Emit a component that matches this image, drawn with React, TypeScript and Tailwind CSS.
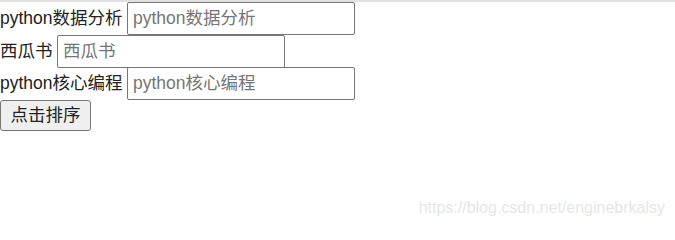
import { useState } from 'react';

const font = 'font-["Liberation_Sans","Noto_Sans_CJK_SC",sans-serif]';

const books = [
  { id: 'a', name: 'python数据分析', label: 'w-[123px]' },
  { id: 'b', name: '西瓜书', label: 'w-[53px]' },
  { id: 'c', name: 'python核心编程', label: 'w-[123px]' },
];

export default function App() {
  const [values, setValues] = useState<Record<string, string>>({});

  return (
    <div className={`${font} flex h-[227px] flex-col bg-white text-[17.5px] text-[#222]`}>
      <div className="h-[2px] bg-[#e1e1e1]" />
      <div className="flex flex-col">
        {books.map((b, i) => (
          <div key={b.id} className={`flex items-center ${i === 1 ? 'h-[32px]' : 'h-[33px]'}`}>
            <span className={`${b.label} shrink-0 whitespace-nowrap`}>{b.name}</span>
            <input
              className="ml-[4px] h-[33px] w-[228px] rounded-[2px] border border-[#767676] px-[5px] text-[17.5px] text-[#222] outline-none placeholder:text-[#757575]"
              placeholder={b.name}
              value={values[b.id] ?? ''}
              onChange={e => setValues({ ...values, [b.id]: e.target.value })}
            />
          </div>
        ))}
      </div>
      <div>
        <button className="h-[31px] w-[91px] rounded-[3px] border border-[#767676] bg-[#efefef] text-[17.5px] text-[#222]">
          点击排序
        </button>
      </div>
      <div className="mt-auto self-end pr-[10px] pb-[7px] text-[16px] text-[#e6e6e6]">
        https://blog.csdn.net/enginebrkalsy
      </div>
    </div>
  );
}
